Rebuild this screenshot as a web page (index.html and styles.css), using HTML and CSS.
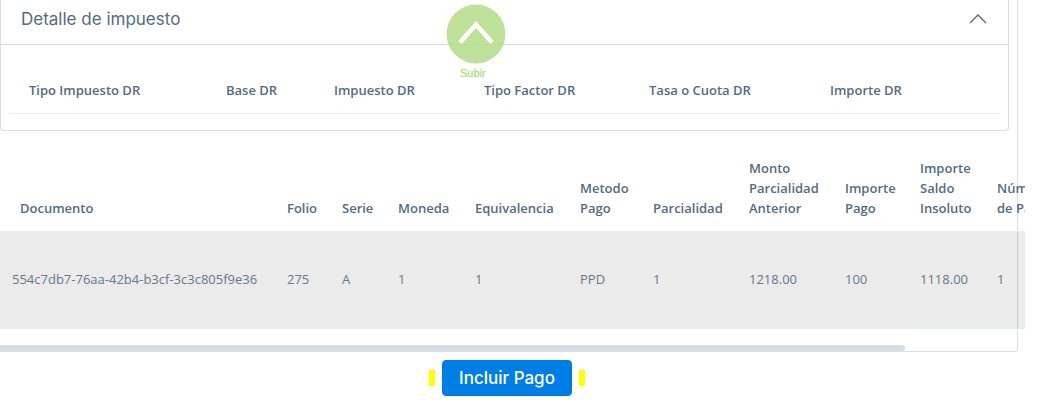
FILE: index.html
```html
<!DOCTYPE html>
<html lang="es">
  <head>
    <meta charset="UTF-8" />
    <meta name="viewport" content="width=device-width, initial-scale=1.0" />
    <title>Incluir Pago</title>
    <link rel="stylesheet" href="styles.css">
  </head>
  <body>
    <main class="card">
      <section class="panel">
        <button class="panel-header" type="button" aria-expanded="true">
          <span>Detalle de impuesto</span>
          <svg class="chevron" viewBox="0 0 18 10" aria-hidden="true">
            <path d="M1 9 L9 1 L17 9" />
          </svg>
        </button>
        <div class="panel-body">
          <table class="taxes">
            <thead>
              <tr>
                <th class="col-type">Tipo Impuesto DR</th>
                <th class="col-base">Base DR</th>
                <th class="col-tax">Impuesto DR</th>
                <th class="col-factor">Tipo Factor DR</th>
                <th class="col-rate">Tasa o Cuota DR</th>
                <th>Importe DR</th>
              </tr>
            </thead>
          </table>
        </div>
      </section>

      <div class="table-wrap">
        <table class="documents">
          <thead>
            <tr>
              <th class="col-doc">Documento</th>
              <th class="col-folio">Folio</th>
              <th class="col-serie">Serie</th>
              <th class="col-currency">Moneda</th>
              <th class="col-equiv">Equivalencia</th>
              <th class="col-method">Metodo Pago</th>
              <th class="col-part">Parcialidad</th>
              <th class="col-part">Monto Parcialidad Anterior</th>
              <th class="col-amount">Importe Pago</th>
              <th class="col-currency">Importe Saldo Insoluto</th>
              <th class="col-number">Número<br>de Pago</th>
            </tr>
          </thead>
          <tbody>
            <tr>
              <td>554c7db7-76aa-42b4-b3cf-3c3c805f9e36</td>
              <td>275</td>
              <td>A</td>
              <td>1</td>
              <td>1</td>
              <td>PPD</td>
              <td>1</td>
              <td>1218.00</td>
              <td>100</td>
              <td>1118.00</td>
              <td>1</td>
            </tr>
          </tbody>
        </table>
      </div>
      <div class="scroll-track"><div class="scroll-thumb"></div></div>
    </main>

    <div class="actions">
      <span class="mark"></span>
      <button class="btn" type="button">Incluir Pago</button>
      <span class="mark"></span>
    </div>

    <a class="to-top" href="#">
      <svg class="to-top-icon" viewBox="0 0 60 60" aria-hidden="true">
        <circle cx="30" cy="30" r="29.5" />
        <path d="M14 38.5 L30 20.5 L46 38.5" />
      </svg>
      <span class="to-top-label">Subir</span>
    </a>
  </body>
</html>
```

FILE: styles.css
```css
* {
  box-sizing: border-box;
}

body {
  margin: 0;
  background: #fff;
  color: #526b83;
  font-family: "Open Sans", sans-serif;
  font-size: 13px;
  line-height: 20px;
  overflow-x: hidden;
}

.card {
  margin-right: 20px;
  border: solid #dcdddf;
  border-width: 0 1px 1px 0;
  border-radius: 0 0 4px 0;
}

/* tax detail panel */
.panel {
  margin-right: 8px;
  border: 1px solid #dcdddf;
  border-top: 0;
  border-radius: 0 0 4px 4px;
}

.panel-header {
  display: flex;
  justify-content: space-between;
  align-items: center;
  width: 100%;
  height: 45px;
  padding: 0 21px 6px 20px;
  border: 0;
  border-bottom: 1px solid #dcdddf;
  background: none;
  color: inherit;
  font-family: Inter, sans-serif;
  font-size: 17px;
  cursor: pointer;
}

.chevron {
  width: 18px;
  height: 10px;
  fill: none;
  stroke: currentColor;
  stroke-width: 1.3;
}

.panel-body {
  padding: 22px 8px 16px;
}

table {
  border-collapse: collapse;
  table-layout: fixed;
  width: 100%;
}

th {
  padding: 13px 12px;
  border-bottom: 1px solid #e9edf3;
  font-weight: 600;
  text-align: left;
  vertical-align: bottom;
}

th:first-child {
  padding-left: 20px;
}

.col-type { width: 205px; }
.col-base { width: 108px; }
.col-tax { width: 150px; }
.col-factor { width: 165px; }
.col-rate { width: 181px; }

/* related documents */
.table-wrap {
  margin-right: -8px;
  padding-top: 14px;
  overflow: hidden;
}

.documents {
  width: 1085px;
}

td {
  padding: 37px 12px 39px;
  border-bottom: 1px solid #e3ebf3;
  background: rgba(0, 0, 0, 0.08);
  color: #66788a;
}

.col-doc { width: 275px; }
.col-folio { width: 55px; }
.col-serie { width: 56px; }
.col-currency { width: 77px; }
.col-equiv { width: 105px; }
.col-method { width: 73px; }
.col-part { width: 96px; }
.col-amount { width: 75px; }
.col-number { width: 100px; }

.scroll-track {
  padding-top: 16px;
}

.scroll-thumb {
  width: 89%;
  height: 6px;
  border-radius: 0 3px 3px 0;
  background: #d5dde6;
}

.actions {
  display: flex;
  justify-content: center;
  align-items: center;
  gap: 7px;
  margin: 8px 24px 16px 0;
}

.mark {
  width: 6px;
  height: 16px;
  background: #ff0;
}

.btn {
  height: 36px;
  padding: 0 16px;
  border: 1px solid #0078e0;
  border-radius: 4px;
  background: #007ee6;
  color: #fff;
  font-family: Inter, sans-serif;
  font-size: 17px;
  font-weight: 500;
  cursor: pointer;
}

.to-top {
  position: absolute;
  top: 4px;
  left: 446px;
  color: #9bd561;
  font: 11px/18px "Liberation Sans", sans-serif;
  text-decoration: none;
  opacity: 0.8;
}

.to-top-icon {
  display: block;
  width: 60px;
  height: 60px;
}

.to-top-label {
  padding-left: 14px;
  -webkit-text-stroke: 0.3px #9bd561;
}

.to-top-icon circle {
  fill: #aedb82;
}

.to-top-icon path {
  fill: none;
  stroke: #fff;
  stroke-width: 4.5;
}
```
